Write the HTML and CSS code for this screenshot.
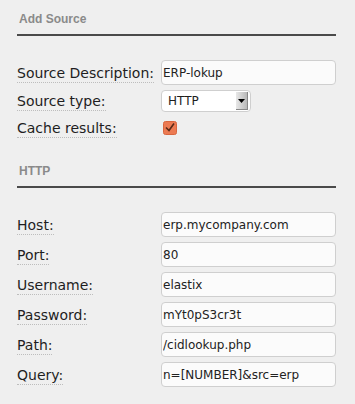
FILE: index.html
```html
<!DOCTYPE html>
<html lang="en">
<head>
  <meta charset="UTF-8" />
  <title>Add Source</title>
  <link rel="stylesheet" href="styles.css">
</head>
<body>
  <main class="panel">
    <section class="group">
      <h2 class="group-title">Add Source</h2>
      <div class="form-rows first">
        <div class="row">
          <label class="label"><span>Source Description:</span></label>
          <input class="field" type="text" value="ERP-lokup">
        </div>
        <div class="row row-select">
          <label class="label"><span>Source type:</span></label>
          <div class="select">
            <span class="select-value">HTTP</span>
            <span class="select-arrow">
              <svg viewBox="0 0 7 4" width="7" height="4"><path d="M0 0h7L3.5 4z"/></svg>
            </span>
          </div>
        </div>
        <div class="row row-check">
          <label class="label"><span>Cache results:</span></label>
          <span class="checkbox">
            <svg viewBox="0 0 14 14" width="14" height="14">
              <rect x="0.5" y="0.5" width="13" height="13" rx="2" fill="#ec7a52" stroke="#d8663f"/>
              <path d="M3 6.5l3 3 5-7" fill="none" stroke="#5a2a18" stroke-width="1.6"/>
            </svg>
          </span>
        </div>
      </div>
    </section>

    <section class="group">
      <h2 class="group-title">HTTP</h2>
      <div class="form-rows">
        <div class="row">
          <label class="label"><span>Host:</span></label>
          <input class="field" type="text" value="erp.mycompany.com">
        </div>
        <div class="row">
          <label class="label"><span>Port:</span></label>
          <input class="field" type="text" value="80">
        </div>
        <div class="row">
          <label class="label"><span>Username:</span></label>
          <input class="field" type="text" value="elastix">
        </div>
        <div class="row">
          <label class="label"><span>Password:</span></label>
          <input class="field" type="text" value="mYt0pS3cr3t">
        </div>
        <div class="row">
          <label class="label"><span>Path:</span></label>
          <input class="field" type="text" value="/cidlookup.php">
        </div>
        <div class="row">
          <label class="label"><span>Query:</span></label>
          <input class="field" type="text" value="n=[NUMBER]&amp;src=erp">
        </div>
      </div>
    </section>
  </main>
</body>
</html>
```

FILE: styles.css
```css
:root {
  --bg: #efefef;
  --text: #1e1e1e;
  --heading: #8a8a8a;
  --rule: #4a4a4a;
  --border: #cfcfcf;
  --field-bg: #fbfbfb;
}

* {
  margin: 0;
  padding: 0;
  box-sizing: border-box;
}

html, body {
  width: 355px;
  height: 404px;
  background: var(--bg);
  color: var(--text);
  font-family: "DejaVu Sans", Verdana, sans-serif;
  overflow: hidden;
}

.panel {
  padding: 12px 19px 0 17px;
}

.group-title {
  font-family: "Liberation Sans", Arial, sans-serif;
  font-size: 12px;
  font-weight: 700;
  color: var(--heading);
  padding: 0 0 8px 2px;
  border-bottom: 2px solid var(--rule);
  line-height: 14px;
}

.form-rows {
  display: flex;
  flex-direction: column;
  gap: 5px;
  padding: 24px 0 21px;
}

.form-rows.first {
  padding-bottom: 25px;
}

.row {
  display: flex;
  align-items: center;
  height: 25px;
}

.row-select,
.row-check {
  height: 22px;
}

.label {
  width: 144px;
  flex: none;
  font-size: 14px;
}

.label span {
  border-bottom: 1px dotted #bdbdbd;
  padding-bottom: 1px;
}

.field {
  width: 175px;
  height: 25px;
  border: 1px solid var(--border);
  border-radius: 4px;
  background: var(--field-bg);
  font-family: "DejaVu Sans", Verdana, sans-serif;
  font-size: 12px;
  color: #222;
  padding: 0 1px;
  outline: none;
}

.select {
  width: 90px;
  height: 22px;
  display: flex;
  align-items: center;
  justify-content: space-between;
  border: 1px solid var(--border);
  border-radius: 4px;
  background: #fff;
  padding: 0 0 0 6px;
  font-size: 12px;
}

.select-arrow {
  width: 12px;
  height: 18px;
  margin-right: 2px;
  display: flex;
  align-items: center;
  justify-content: center;
  background: linear-gradient(to right, #e8e8e8, #b8b8b8);
  border-right: 1px solid #888;
  border-bottom: 1px solid #888;
}

.select-arrow svg {
  fill: #000;
}

.checkbox {
  display: inline-flex;
  margin-left: 2px;
}
```
